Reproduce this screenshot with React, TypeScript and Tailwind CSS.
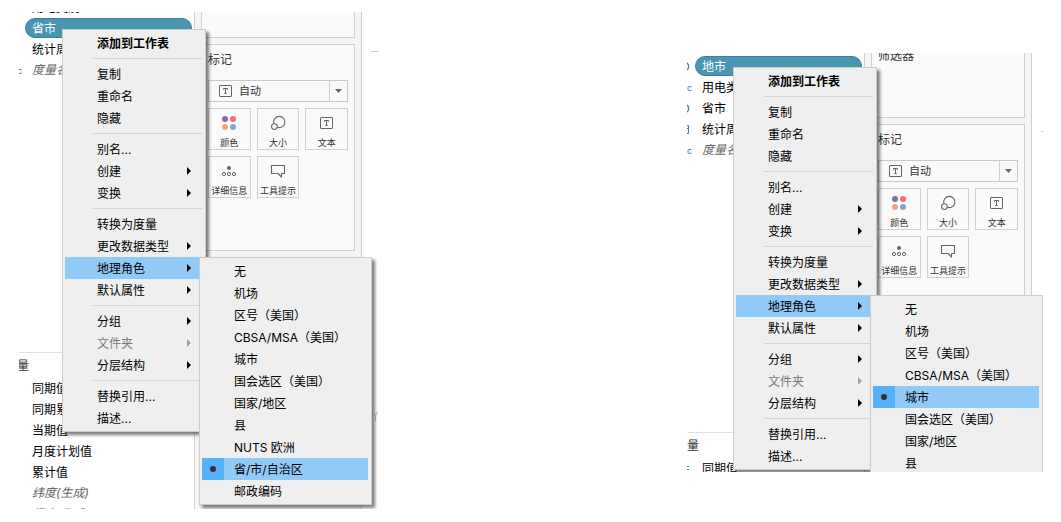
import React, { useState } from 'react';

type Field = {
  name: string;
  icon?: 'globe' | 'text' | 'date' | 'number';
  selected?: boolean;
  generated?: boolean;
};

type MenuEntry = {
  label: string;
  bold?: boolean;
  arrow?: boolean;
  disabled?: boolean;
};

// Groups of the context menu, a separator is drawn between them
const menuGroups: MenuEntry[][] = [
  [{ label: '添加到工作表', bold: true }],
  [{ label: '复制' }, { label: '重命名' }, { label: '隐藏' }],
  [{ label: '别名...' }, { label: '创建', arrow: true }, { label: '变换', arrow: true }],
  [
    { label: '转换为度量' },
    { label: '更改数据类型', arrow: true },
    { label: '地理角色', arrow: true },
    { label: '默认属性', arrow: true },
  ],
  [
    { label: '分组', arrow: true },
    { label: '文件夹', arrow: true, disabled: true },
    { label: '分层结构', arrow: true },
  ],
  [{ label: '替换引用...' }, { label: '描述...' }],
];

const geoRoles = [
  '无',
  '机场',
  '区号（美国）',
  'CBSA/MSA（美国）',
  '城市',
  '国会选区（美国）',
  '国家/地区',
  '县',
  'NUTS 欧洲',
  '省/市/自治区',
  '邮政编码',
];

const TextIcon = () => (
  <svg width="13" height="12" viewBox="0 0 13 12" fill="none" stroke="#666" className="shrink-0">
    <rect x="0.5" y="0.5" width="12" height="11" rx="0.5" />
    <path d="M4.5 4.8V3.5h4v1.3M6.5 3.5v5M5.3 8.5h2.4" />
  </svg>
);

const ColorIcon = () => (
  <svg width="16" height="16" viewBox="0 0 16 16">
    <circle cx="4" cy="4" r="3" fill="#85709b" />
    <circle cx="12" cy="4" r="3" fill="#fb6a7c" />
    <circle cx="4" cy="12" r="3" fill="#f5a77c" />
    <circle cx="12" cy="12" r="3" fill="#82a5cc" />
  </svg>
);

const SizeIcon = () => (
  <svg width="16" height="16" viewBox="0 0 16 16" fill="none" stroke="#666" strokeWidth="1.1">
    <path d="M3.9 8.6A5.6 5.6 0 1 1 7.2 12.2" />
    <circle cx="4.4" cy="11.6" r="2.9" />
  </svg>
);

const DetailIcon = () => (
  <svg width="16" height="16" viewBox="0 0 16 16" fill="none" stroke="#666">
    <circle cx="8" cy="5" r="2" fill="#666" stroke="none" />
    <circle cx="3" cy="11" r="1.6" />
    <circle cx="8" cy="11" r="1.6" />
    <circle cx="13" cy="11" r="1.6" />
  </svg>
);

const TooltipIcon = () => (
  <svg width="16" height="16" viewBox="0 0 16 16" fill="none" stroke="#666" strokeWidth="1.1">
    <path d="M1.500 2.500h13v8h-3v3.500l-3.500-3.500h-6.500z" strokeLinejoin="round" />
  </svg>
);

const markButtons = [
  { label: '颜色', icon: <ColorIcon /> },
  { label: '大小', icon: <SizeIcon /> },
  { label: '文本', icon: <TextIcon /> },
  { label: '详细信息', icon: <DetailIcon /> },
  { label: '工具提示', icon: <TooltipIcon /> },
];

const FieldIcon = ({ type }: { type?: Field['icon'] }) => (
  <span className="flex w-[5px] shrink-0 items-center text-[9px] leading-none text-[#3b7f9c]">
    {type === 'text' && 'c'}
    {type === 'globe' && (
      <svg width="5" height="9" viewBox="0 0 5 9" fill="none" stroke="#3b7f9c">
        <path d="M-1 .5A2.500 4 0 0 1-1 8.500" />
        <path d="M-.5.5Q1.800 1.500 1.800 4.500T-.5 8.500" />
      </svg>
    )}
    {type === 'date' && (
      <svg width="5" height="9" viewBox="0 0 5 9" fill="none" stroke="#3b7f9c">
        <path d="M0 .5h1.500v8H0M0 3.500h1.500" />
      </svg>
    )}
    {type === 'number' && (
      <svg width="5" height="9" viewBox="0 0 5 9" stroke="#3fa58a">
        <path d="M0 2.500h2M0 5.500h2" />
      </svg>
    )}
  </span>
);

const FieldRow = ({ field }: { field: Field }) => (
  <li className="mb-px flex h-5 w-[177px] items-center gap-[3px] pr-[2px]">
    <FieldIcon type={field.icon} />
    <button
      type="button"
      className={
        'flex h-5 flex-1 items-center whitespace-nowrap rounded-full border pl-[6px] text-xs ' +
        (field.selected ? 'border-[#3b7f9c] bg-[#4996b2] text-white ' : 'border-transparent ') +
        (field.generated ? 'italic text-[#666]' : 'pt-[2px]')
      }
    >
      {field.name}
    </button>
  </li>
);

const MarksCard = () => {
  const [mark, setMark] = useState('自动');

  return (
    <div className="h-[207px] shrink-0 border border-[#d0d0d0] bg-[#fafafa] px-[6px]">
      <h2 className="mb-[6px] flex h-[29px] items-center text-xs text-[#333]">标记</h2>
      <div className="flex h-[22px] items-center border border-[#c8c8c8] pl-[10px]">
        <TextIcon />
        <select
          aria-label="标记"
          value={mark}
          onChange={(e) => setMark(e.target.value)}
          className="h-5 min-w-0 flex-1 appearance-none bg-transparent pl-[7px] text-[11px] text-[#333] outline-none"
        >
          <option>自动</option>
        </select>
        <span className="flex h-5 w-[18px] items-center justify-center border-l border-[#d0d0d0]">
          <svg width="7" height="4" viewBox="0 0 7 4" fill="#666">
            <path d="M0 0h7L3.500 4z" />
          </svg>
        </span>
      </div>
      <div className="mt-[6px] grid grid-cols-3 gap-[6px]">
        {markButtons.map((b) => (
          <button
            key={b.label}
            type="button"
            className="flex h-[42px] flex-col items-center border border-[#d0d0d0] pt-[2px]"
          >
            <span className="flex h-6 shrink-0 items-center">{b.icon}</span>
            <span className="shrink-0 whitespace-nowrap text-[9px] leading-4 text-[#333]">{b.label}</span>
          </button>
        ))}
      </div>
    </div>
  );
};

const Arrow = ({ disabled }: { disabled?: boolean }) => (
  <svg width="5" height="9" viewBox="0 0 5 9" className="mr-[11px]">
    {disabled && <path d="M1 9l4-4V4L1 8z" fill="#fff" />}
    <path d="M0 0l4 4-4 4z" fill={disabled ? '#a0a0a0' : '#000'} />
  </svg>
);

const GeoMenu = ({ role, onPick }: { role: string; onPick: (r: string) => void }) => (
  <ul
    role="menu"
    className="absolute left-[134px] top-0 z-10 w-[173px] border border-[#ccc] bg-[#efefef] p-[2px] shadow-[3px_3px_3px_rgba(0,0,0,0.5)]"
  >
    {geoRoles.map((r) => (
      <li
        key={r}
        className={'mr-px ' + (r === role ? 'bg-[#91c9f7]' : '')}
      >
        <button
          type="button"
          role="menuitemradio"
          aria-checked={r === role}
          onClick={() => onPick(r)}
          className="flex h-[22px] w-full items-center gap-[10px] whitespace-nowrap text-xs"
        >
          <span
            className={'flex size-[22px] items-center justify-center ' + (r === role ? 'bg-[#56b0fa]' : '')}
          >
            {r === role && <span className="size-[6px] rounded-full bg-[#333]" />}
          </span>
          <span className="pt-[2px]">{r}</span>
        </button>
      </li>
    ))}
  </ul>
);

const ContextMenu = ({ initialRole, className }: { initialRole: string; className: string }) => {
  const [role, setRole] = useState(initialRole);

  return (
    <div
      role="menu"
      className={
        'absolute w-36 border border-[#ccc] bg-[#efefef] p-[2px] text-black shadow-[3px_3px_3px_rgba(0,0,0,0.5)] ' +
        className
      }
    >
      {menuGroups.map((group, i) => (
        <React.Fragment key={i}>
          {i > 0 && <hr className="my-1 ml-7 mr-px border-t border-[#d4d4d4]" />}
          <ul>
            {group.map((item) => (
              <li
                key={item.label}
                className={'relative ' + (item.label === '地理角色' ? 'bg-[#91c9f7]' : '')}
              >
                <button
                  type="button"
                  role="menuitem"
                  disabled={item.disabled}
                  className={
                    'flex h-[22px] w-full items-center justify-between whitespace-nowrap pl-8 text-xs ' +
                    (item.bold ? 'font-bold ' : '') +
                    (item.disabled ? 'text-[#7a7a7a]' : '')
                  }
                >
                  <span className="pt-[2px]">{item.label}</span>
                  {item.arrow && <Arrow disabled={item.disabled} />}
                </button>
                {item.label === '地理角色' && <GeoMenu role={role} onPick={setRole} />}
              </li>
            ))}
          </ul>
        </React.Fragment>
      ))}
    </div>
  );
};

type PaneProps = {
  className: string;
  listClass: string;
  filterClass: string;
  menuClass: string;
  filterTitle?: string;
  dimensions: Field[];
  measures: Field[];
  role: string;
  children: React.ReactNode;
};

const Pane = (props: PaneProps) => (
  <section className={'relative flex shrink-0 overflow-hidden ' + props.className}>
    {/* Data pane */}
    <div className="flex min-w-0 flex-1 flex-col items-end">
      <div className={'w-[177px] shrink-0 ' + props.listClass}>
        <ul>
          {props.dimensions.map((f) => (
            <FieldRow key={f.name} field={f} />
          ))}
        </ul>
      </div>
      <div className="w-[177px] border-t border-[#e0e0e0]">
        <h2 className="flex h-[25px] items-center text-xs text-[#333]">量</h2>
        <ul>
          {props.measures.map((f) => (
            <FieldRow key={f.name} field={f} />
          ))}
        </ul>
      </div>
    </div>

    {/* Shelves */}
    <div className="flex w-[168px] shrink-0 flex-col gap-[6px] border-x border-[#d0d0d0] bg-[#f5f5f5] px-[6px]">
      <div className={'shrink-0 border border-t-0 border-[#d0d0d0] bg-[#fafafa] px-[6px] ' + props.filterClass}>
        {props.filterTitle && (
          <h2 className="flex h-[6px] items-center text-xs text-[#333]">{props.filterTitle}</h2>
        )}
      </div>
      <MarksCard />
    </div>

    {/* Edge of the view */}
    <div className="relative shrink-0">{props.children}</div>

    <ContextMenu initialRole={props.role} className={props.menuClass} />
  </section>
);

const App: React.FC = () => {
  return (
    <main className="flex min-h-screen items-start justify-between bg-white pl-[19px] pr-[18px] font-['Inter','Noto_Sans_CJK_SC',sans-serif] text-black">
      <Pane
        className="mt-3 h-[497px] w-[359px]"
        listClass="h-[340px] [&>ul]:-mt-[15px]"
        filterClass="h-[26px]"
        menuClass="left-[43px] top-[17px]"
        role="省/市/自治区"
        dimensions={[
          { name: '用电类别' },
          { name: '省市', selected: true },
          { name: '统计周' },
          { name: '度量名', icon: 'text', generated: true },
        ]}
        measures={[
          { name: '同期值' },
          { name: '同期累' },
          { name: '当期值' },
          { name: '月度计划值' },
          { name: '累计值' },
          { name: '纬度(生成)', generated: true },
          { name: '经度(生成)', generated: true },
        ]}
      >
        <div className="flex w-4 flex-col items-end">
          <span className="mt-[39px] h-px w-[7px] bg-[#ccc]" />
          <svg width="4" height="10" viewBox="0 0 4 10" fill="none" stroke="#b4c4d0" className="mt-[359px]">
            <path d="M0 2l1.500 3M4 0L1.500 5v5" />
          </svg>
        </div>
      </Pane>

      <Pane
        className="mt-[53px] h-[419px] w-[356px]"
        listClass="h-[379px] pt-[3px]"
        filterClass="h-[65px]"
        menuClass="left-[46px] top-[14px]"
        filterTitle="筛选器"
        role="城市"
        dimensions={[
          { name: '地市', icon: 'globe', selected: true },
          { name: '用电类', icon: 'text' },
          { name: '省市', icon: 'globe' },
          { name: '统计周', icon: 'date' },
          { name: '度量名', icon: 'text', generated: true },
        ]}
        measures={[{ name: '同期值', icon: 'number' }]}
      >
        <div className="flex w-[11px] flex-col items-end">
          <span className="mt-[78px] h-px w-[2px] bg-[#ccc]" />
        </div>
      </Pane>
    </main>
  );
};

export default App;
